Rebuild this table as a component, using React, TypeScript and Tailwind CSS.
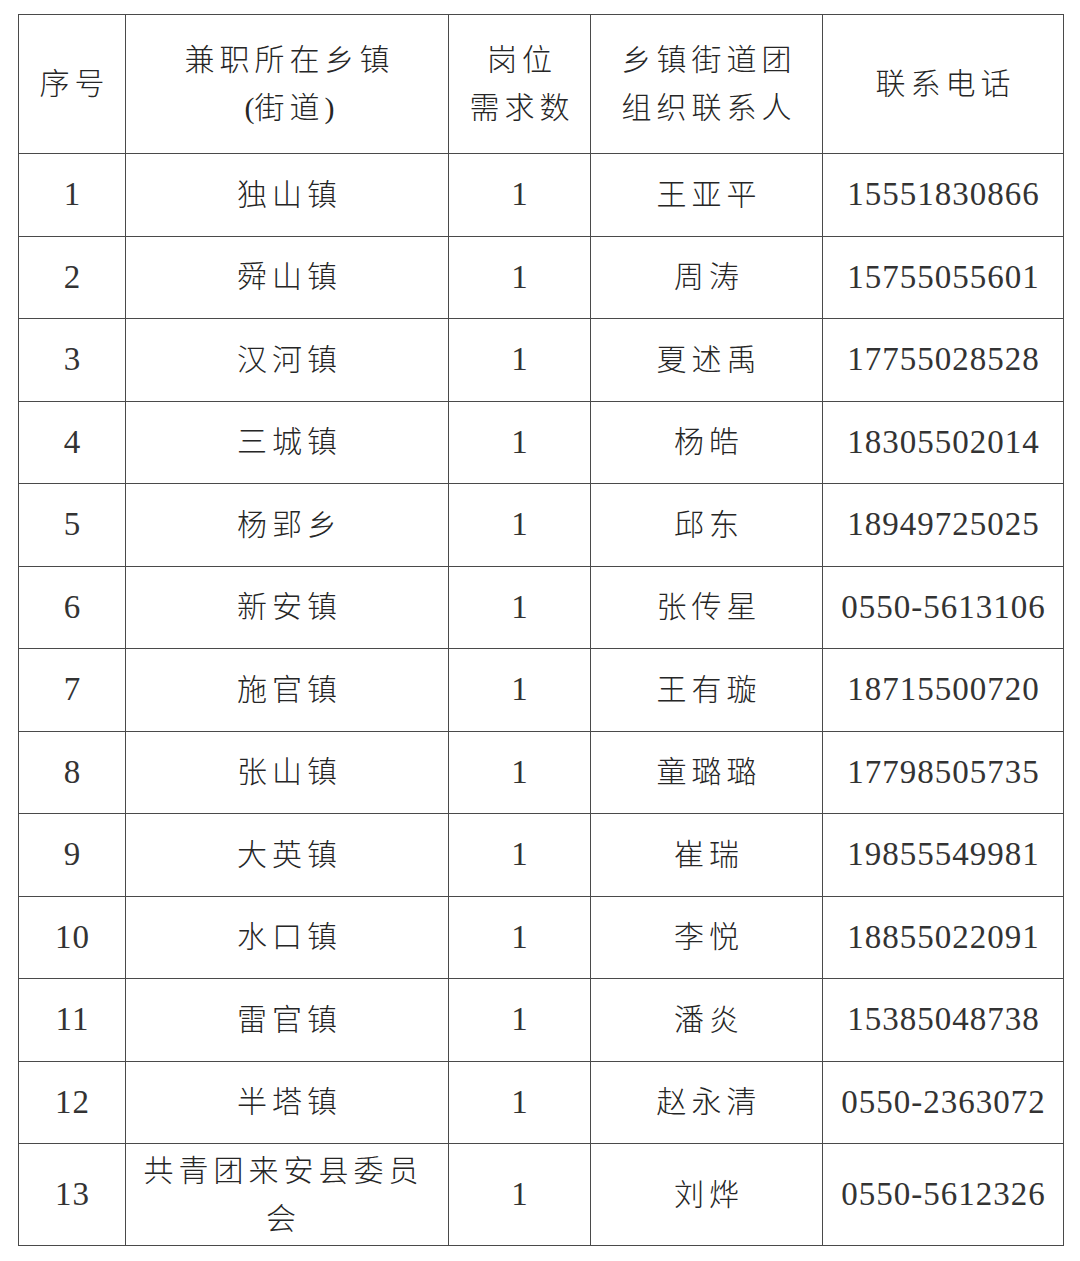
const rows = [
  ['1', '独山镇', '王亚平', '15551830866'],
  ['2', '舜山镇', '周涛', '15755055601'],
  ['3', '汉河镇', '夏述禹', '17755028528'],
  ['4', '三城镇', '杨皓', '18305502014'],
  ['5', '杨郢乡', '邱东', '18949725025'],
  ['6', '新安镇', '张传星', '0550-5613106'],
  ['7', '施官镇', '王有璇', '18715500720'],
  ['8', '张山镇', '童璐璐', '17798505735'],
  ['9', '大英镇', '崔瑞', '19855549981'],
  ['10', '水口镇', '李悦', '18855022091'],
  ['11', '雷官镇', '潘炎', '15385048738'],
  ['12', '半塔镇', '赵永清', '0550-2363072'],
]

// shared cell classes
const cell = 'border border-[#4a4a4a] text-center align-middle p-0'
const zh = "text-[30px] font-light tracking-[5px] leading-[48px] pl-[5px] font-['Liberation_Serif','Noto_Sans_CJK_SC',serif]"
const num = "text-[33px] tracking-[1px] pl-[1px] leading-none text-[#333] font-['Liberation_Serif',serif]"

export default function App() {
  return (
    <div className="bg-white w-[1080px] h-[1261px] pt-[14px] pl-[18px] text-[#262626]">
      <table className="border-collapse table-fixed w-[1045px]">
        <colgroup>
          <col className="w-[107px]" />
          <col className="w-[323px]" />
          <col className="w-[142px]" />
          <col className="w-[232px]" />
          <col className="w-[241px]" />
        </colgroup>
        <thead>
          <tr className="h-[139px]">
            <th className={`${cell} ${zh}`}>序号</th>
            <th className={`${cell} ${zh}`}>
              兼职所在乡镇
              <br />
              <span className="tracking-normal">(</span>街道<span className="tracking-normal">)</span>
            </th>
            <th className={`${cell} ${zh}`}>
              岗位
              <br />
              需求数
            </th>
            <th className={`${cell} ${zh}`}>
              乡镇街道团
              <br />
              组织联系人
            </th>
            <th className={`${cell} ${zh}`}>联系电话</th>
          </tr>
        </thead>
        <tbody>
          {rows.map(r => (
            <tr key={r[0]} className="h-[82.5px]">
              <td className={`${cell} ${num}`}>{r[0]}</td>
              <td className={`${cell} ${zh}`}>{r[1]}</td>
              <td className={`${cell} ${num}`}>1</td>
              <td className={`${cell} ${zh}`}>{r[2]}</td>
              <td className={`${cell} ${num}`}>{r[3]}</td>
            </tr>
          ))}
          <tr className="h-[102px]">
            <td className={`${cell} ${num}`}>13</td>
            <td className={`${cell} ${zh} px-3`}>共青团来安县委员会</td>
            <td className={`${cell} ${num}`}>1</td>
            <td className={`${cell} ${zh}`}>刘烨</td>
            <td className={`${cell} ${num}`}>0550-5612326</td>
          </tr>
        </tbody>
      </table>
    </div>
  )
}
